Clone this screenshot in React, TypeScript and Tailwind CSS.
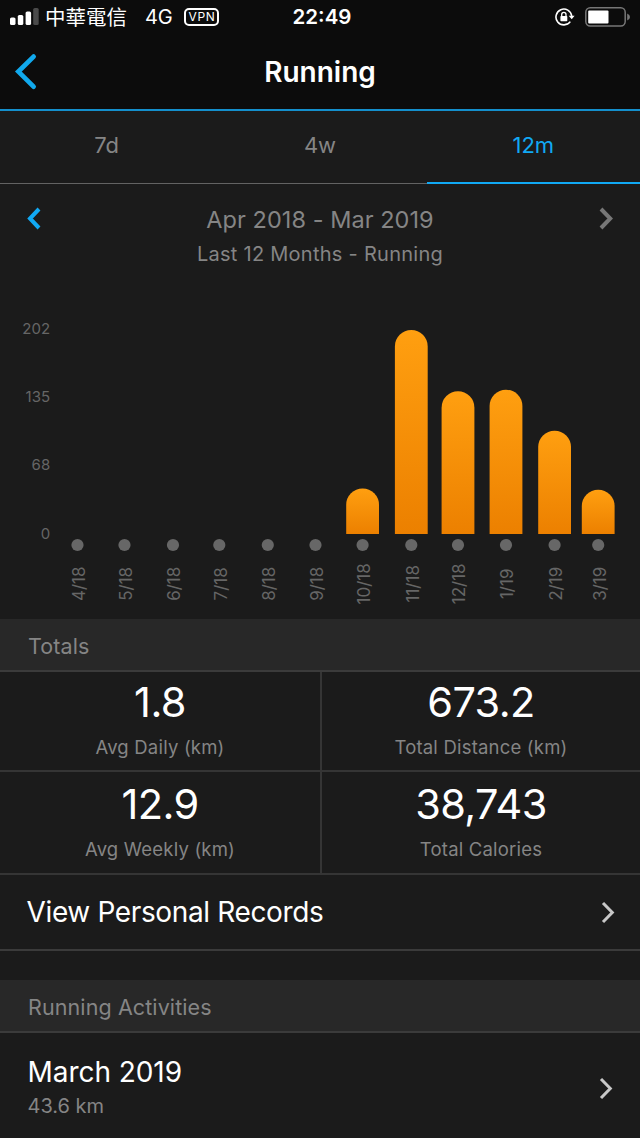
import type { ReactNode } from "react";

interface MonthBar {
  label: string;
  x: number;
  top: number | null;
}

const BASELINE = 534;
const CHART_TOP = 300;

const MONTHS: MonthBar[] = [
  { label: "4/18", x: 77.5, top: null },
  { label: "5/18", x: 124.5, top: null },
  { label: "6/18", x: 173, top: null },
  { label: "7/18", x: 219.3, top: null },
  { label: "8/18", x: 267.8, top: null },
  { label: "9/18", x: 315.5, top: null },
  { label: "10/18", x: 362.6, top: 488.5 },
  { label: "11/18", x: 411.3, top: 330 },
  { label: "12/18", x: 458, top: 391.3 },
  { label: "1/19", x: 506, top: 389.7 },
  { label: "2/19", x: 554.6, top: 430.7 },
  { label: "3/19", x: 598.2, top: 489.7 },
];

const TICKS = [
  { label: "202", y: 334.4 },
  { label: "135", y: 402 },
  { label: "68", y: 470 },
  { label: "0", y: 539 },
];

const TOTALS = [
  { value: "1.8", label: "Avg Daily (km)" },
  { value: "673.2", label: "Total Distance (km)" },
  { value: "12.9", label: "Avg Weekly (km)" },
  { value: "38,743", label: "Total Calories" },
];

function Chevron({
  left = false,
  className,
  strokeWidth = 3,
}: {
  left?: boolean;
  className: string;
  strokeWidth?: number;
}) {
  return (
    <svg
      viewBox="0 0 14 23"
      className={className}
      fill="none"
      stroke="currentColor"
      strokeWidth={strokeWidth}
      aria-hidden
    >
      <path d={left ? "M12 2 L3 11.5 L12 21" : "M2 2 L11.3 11.5 L2 21"} />
    </svg>
  );
}

function StatusBar() {
  return (
    <div className="grid h-[34px] grid-cols-[1fr_auto_1fr] items-center pl-[10px] pr-[9px] text-white">
      <div className="flex items-center">
        <svg viewBox="0 0 30 18" className="h-[18px] w-[30px]" aria-hidden>
          <rect x="0" y="9.5" width="5.5" height="7.5" rx="1.6" fill="#fff" />
          <rect x="7.8" y="7" width="5.5" height="10" rx="1.6" fill="#fff" />
          <rect x="15.6" y="3.5" width="5.5" height="13.5" rx="1.6" fill="#fff" />
          <rect x="23.2" y="0" width="5.5" height="17" rx="1.6" fill="#4a4a4a" />
        </svg>
        <span className="ml-[5px] pb-[2px] font-['Noto_Sans_CJK_TC',sans-serif] text-[20.5px] leading-[32px]">
          中華電信
        </span>
        <span className="ml-[18px] text-[20px] tracking-[-0.2px]">4G</span>
        <span className="ml-[12px] flex h-[18px] w-[35px] items-center justify-center rounded-[5px] border-2 border-white text-[12px] tracking-[0.6px]">
          VPN
        </span>
      </div>
      <span className="pl-[3px] text-[20.5px] font-semibold">22:49</span>
      <div className="flex items-center justify-end">
        <svg viewBox="0 0 20 18" className="h-[18px] w-[20px]" fill="none" aria-hidden>
          <path d="M15.3 13.6 A7.9 7.9 0 1 1 16.7 8" stroke="#fff" strokeWidth="1.6" />
          <path d="M13.7 7.7 H19.6 L16.7 11.3 Z" fill="#fff" />
          <rect x="5.4" y="8" width="6.9" height="5.2" rx="0.7" fill="#fff" />
          <path d="M6.7 8.4 V6.6 A2.15 2.15 0 0 1 11 6.6 V8.4" stroke="#fff" strokeWidth="1.3" />
        </svg>
        <svg viewBox="0 0 46 20" className="ml-[10px] h-[20px] w-[46px]" fill="none" aria-hidden>
          <rect x="0.8" y="0.8" width="39.4" height="18.2" rx="4.4" stroke="#777" strokeWidth="1.5" />
          <rect x="3.2" y="3.4" width="20.3" height="13.2" rx="1" fill="#fff" />
          <path d="M42.2 6.5 Q45 7.5 45 10 Q45 12.5 42.2 13.5 Z" fill="#777" />
        </svg>
      </div>
    </div>
  );
}

function NavBar() {
  return (
    <header className="grid h-[75px] grid-cols-[60px_1fr_60px] items-center">
      <svg
        viewBox="0 0 24 38"
        className="ml-[14px] h-[38px] w-[24px]"
        fill="none"
        stroke="#11a9ed"
        strokeWidth="4.8"
        strokeLinecap="round"
        strokeLinejoin="miter"
        aria-hidden
      >
        <path d="M19.6 3.6 L4.4 18.6 L19.6 33.6" />
      </svg>
      <h1 className="pt-[2px] text-center text-[28px] font-semibold leading-[73px] text-white">Running</h1>
    </header>
  );
}

function Tabs() {
  return (
    <nav className="grid h-[73px] grid-cols-3 text-center text-[22px] leading-[68px] text-[#858585]">
      <span className="border-b border-[#636363]">7d</span>
      <span className="border-b border-[#636363]">4w</span>
      <span className="border-b-2 border-[#11a9f4] text-[#11a9f4]">12m</span>
    </nav>
  );
}

function BarChart() {
  return (
    <svg
      viewBox={`0 ${CHART_TOP} 640 319`}
      className="block h-[319px] w-[640px]"
      role="img"
      aria-label="Distance by month"
    >
      <defs>
        <linearGradient id="bar" x1="0" y1="0" x2="0" y2="1">
          <stop offset="0" stopColor="#ff9f10" />
          <stop offset="1" stopColor="#ec8000" />
        </linearGradient>
      </defs>
      {TICKS.map((t) => (
        <text key={t.label} x="50.3" y={t.y} textAnchor="end" className="fill-[#666] text-[15px] tracking-[0.1px]">
          {t.label}
        </text>
      ))}
      {MONTHS.map((m) => (
        <g key={m.label}>
          {m.top !== null ? (
            <path
              d={`M${m.x - 16.4} ${BASELINE} V${m.top + 16.4} a16.4 16.4 0 0 1 32.8 0 V${BASELINE} Z`}
              fill="url(#bar)"
            />
          ) : null}
          <circle cx={m.x} cy="545" r="6.1" fill="#676767" />
          <text
            transform={`translate(${m.x + 7.4} 583.8) rotate(-90)`}
            textAnchor="middle"
            className="fill-[#666] text-[17px]"
          >
            {m.label}
          </text>
        </g>
      ))}
    </svg>
  );
}

function SectionHeader({ children }: { children: ReactNode }) {
  return (
    <h2 className="h-[53px] border-b-2 border-[#3b3b3b] bg-[#282828] pl-[28px] pt-px text-[21.5px] leading-[53px] tracking-[0.1px] text-[#858585]">
      {children}
    </h2>
  );
}

export default function App() {
  return (
    <div className="flex h-[1138px] w-[640px] flex-col overflow-hidden bg-[#1b1b1b] font-[Inter,sans-serif] text-white">
      <div className="h-[111px] shrink-0 border-b-2 border-[#148fcc] bg-[#0c0c0c]">
        <StatusBar />
        <NavBar />
      </div>
      <Tabs />

      <section>
        <div className="flex h-[116px] items-start justify-between pl-[27px] pr-[27px] pt-[23px]">
          <Chevron left className="h-[23px] w-[14px] text-[#11a9f4]" strokeWidth={4} />
          <div className="text-center text-[#858585]">
            <p className="text-[23.5px] leading-[26px] tracking-[0.05px]">Apr 2018 - Mar 2019</p>
            <p className="mt-[8px] text-[20px] leading-[26px] tracking-[0.27px]">Last 12 Months - Running</p>
          </div>
          <Chevron className="h-[23px] w-[14px] text-[#777]" strokeWidth={4} />
        </div>
        <BarChart />
      </section>

      <SectionHeader>Totals</SectionHeader>
      <div className="grid grid-cols-[322px_318px]">
        {TOTALS.map((t, i) => (
          <div
            key={t.label}
            className={`flex flex-col items-center border-b-2 border-[#353535] ${
              i % 2 === 0 ? "border-r-2" : ""
            } ${i < 2 ? "h-[100px]" : "h-[103px] pt-[2px]"}`}
          >
            <span className="mt-[4px] text-[41.5px] leading-[52px] tracking-[-0.6px]">{t.value}</span>
            <span className="mt-[7px] text-[18.5px] leading-[24px] tracking-[0.2px] text-[#858585]">{t.label}</span>
          </div>
        ))}
      </div>

      <div className="flex h-[76px] items-center justify-between border-b-2 border-[#3b3b3b] pl-[26.5px] pr-[25px]">
        <span className="text-[28px] tracking-[-0.36px]">View Personal Records</span>
        <Chevron className="h-[23px] w-[14px] text-[#c8c8c8]" />
      </div>

      <div className="h-[29px] shrink-0" />
      <SectionHeader>Running Activities</SectionHeader>
      <div className="flex h-[105px] items-center justify-between pl-[27.5px] pr-[27px] pt-[5px]">
        <div>
          <p className="text-[28px] leading-[34px] tracking-[-0.05px]">March 2019</p>
          <p className="mt-px text-[20px] leading-[32px] text-[#858585]">43.6 km</p>
        </div>
        <Chevron className="h-[23px] w-[14px] text-[#c8c8c8]" />
      </div>
    </div>
  );
}
